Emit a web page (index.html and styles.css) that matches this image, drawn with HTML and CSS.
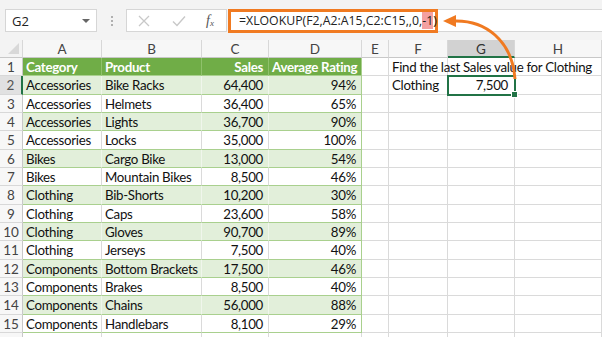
FILE: index.html
```html
<!DOCTYPE html>
<html>
<head>
<meta charset="utf-8">
<link rel="stylesheet" href="styles.css">
</head>
<body>
<div class="app">
  <div class="toolbar">
    <div class="namebox"><span>G2</span><span class="caret"></span></div>
    <div class="dots"><i></i><i></i><i></i></div>
    <div class="fxbox">
      <svg class="ic" width="12" height="12" viewBox="0 0 12 12"><path d="M1 1L11 11M11 1L1 11" stroke="#c8c8c8" stroke-width="1.3" fill="none"/></svg>
      <svg class="ic" width="14" height="12" viewBox="0 0 14 12"><path d="M1 6.5L5 10.5L13 1.5" stroke="#c8c8c8" stroke-width="1.4" fill="none"/></svg>
      <span class="fx">f<sub>x</sub></span>
    </div>
    <div class="field">
      <div class="formula">=XLOOKUP(F2,A2:A15,C2:C15,,0,<span class="hl">-1</span>)</div>
    </div>
  </div>
  <div class="sheet">
    <div class="ch corner"><span class="tri"></span></div>
    <div class="ch">A</div><div class="ch">B</div><div class="ch">C</div><div class="ch">D</div><div class="ch">E</div><div class="ch">F</div><div class="ch sel">G</div><div class="ch">H</div>

    <div class="rh">1</div>
    <div class="c th">Category</div><div class="c th">Product</div><div class="c th r">Sales</div><div class="c th r tl">Average Rating</div>
    <div class="c"></div><div class="c over">Find the last Sales value for Clothing</div><div class="c"></div><div class="c"></div>

    <div class="rh rsel">2</div>
    <div class="c b">Accessories</div><div class="c b">Bike Racks</div><div class="c b r">64,400</div><div class="c b r tl">94%</div>
    <div class="c"></div><div class="c">Clothing</div><div class="c r active">7,500<span class="handle"></span></div><div class="c"></div>

    <div class="rh">3</div>
    <div class="c w">Accessories</div><div class="c w">Helmets</div><div class="c w r">36,400</div><div class="c w r tl">65%</div>
    <div class="c"></div><div class="c"></div><div class="c"></div><div class="c"></div>

    <div class="rh">4</div>
    <div class="c b">Accessories</div><div class="c b">Lights</div><div class="c b r">36,700</div><div class="c b r tl">90%</div>
    <div class="c"></div><div class="c"></div><div class="c"></div><div class="c"></div>

    <div class="rh">5</div>
    <div class="c w">Accessories</div><div class="c w">Locks</div><div class="c w r">35,000</div><div class="c w r tl">100%</div>
    <div class="c"></div><div class="c"></div><div class="c"></div><div class="c"></div>

    <div class="rh">6</div>
    <div class="c b">Bikes</div><div class="c b">Cargo Bike</div><div class="c b r">13,000</div><div class="c b r tl">54%</div>
    <div class="c"></div><div class="c"></div><div class="c"></div><div class="c"></div>

    <div class="rh">7</div>
    <div class="c w">Bikes</div><div class="c w">Mountain Bikes</div><div class="c w r">8,500</div><div class="c w r tl">46%</div>
    <div class="c"></div><div class="c"></div><div class="c"></div><div class="c"></div>

    <div class="rh">8</div>
    <div class="c b">Clothing</div><div class="c b">Bib-Shorts</div><div class="c b r">10,200</div><div class="c b r tl">30%</div>
    <div class="c"></div><div class="c"></div><div class="c"></div><div class="c"></div>

    <div class="rh">9</div>
    <div class="c w">Clothing</div><div class="c w">Caps</div><div class="c w r">23,600</div><div class="c w r tl">58%</div>
    <div class="c"></div><div class="c"></div><div class="c"></div><div class="c"></div>

    <div class="rh">10</div>
    <div class="c b">Clothing</div><div class="c b">Gloves</div><div class="c b r">90,700</div><div class="c b r tl">89%</div>
    <div class="c"></div><div class="c"></div><div class="c"></div><div class="c"></div>

    <div class="rh">11</div>
    <div class="c w">Clothing</div><div class="c w">Jerseys</div><div class="c w r">7,500</div><div class="c w r tl">40%</div>
    <div class="c"></div><div class="c"></div><div class="c"></div><div class="c"></div>

    <div class="rh">12</div>
    <div class="c b">Components</div><div class="c b">Bottom Brackets</div><div class="c b r">17,500</div><div class="c b r tl">46%</div>
    <div class="c"></div><div class="c"></div><div class="c"></div><div class="c"></div>

    <div class="rh">13</div>
    <div class="c w">Components</div><div class="c w">Brakes</div><div class="c w r">8,500</div><div class="c w r tl">40%</div>
    <div class="c"></div><div class="c"></div><div class="c"></div><div class="c"></div>

    <div class="rh">14</div>
    <div class="c b">Components</div><div class="c b">Chains</div><div class="c b r">56,000</div><div class="c b r tl">88%</div>
    <div class="c"></div><div class="c"></div><div class="c"></div><div class="c"></div>

    <div class="rh">15</div>
    <div class="c w">Components</div><div class="c w">Handlebars</div><div class="c w r">8,100</div><div class="c w r tl">29%</div>
    <div class="c"></div><div class="c"></div><div class="c"></div><div class="c"></div>

    <div class="rh"></div>
    <div class="c"></div><div class="c"></div><div class="c"></div><div class="c"></div>
    <div class="c"></div><div class="c"></div><div class="c"></div><div class="c"></div>
  </div>
  <svg class="arrow" width="602" height="337" viewBox="0 0 602 337">
    <path d="M454 21 C485 20, 512 40, 515 79" stroke="#f07a21" stroke-width="3" fill="none"/>
    <polygon points="443,21 456,15 456,27" fill="#f07a21"/>
  </svg>
</div>
</body>
</html>
```

FILE: styles.css
```css
html, body {
  margin: 0;
  padding: 0;
}
body {
  width: 602px;
  height: 337px;
  overflow: hidden;
  background: #ffffff;
  font-family: Lato, "Liberation Sans", sans-serif;
}
.app {
  position: relative;
  width: 602px;
  height: 337px;
  overflow: hidden;
}
.toolbar {
  height: 40px;
  background: #f3f3f3;
  display: flex;
  align-items: flex-start;
  padding-top: 9px;
  box-sizing: border-box;
  padding-left: 5px;
}
.namebox {
  width: 92px;
  height: 23px;
  box-sizing: border-box;
  background: #fff;
  border: 1px solid #d6d6d6;
  display: flex;
  align-items: center;
  justify-content: space-between;
  padding: 0 6px 0 6px;
  font-family: "Open Sans", "Noto Sans", sans-serif;
  font-size: 13px;
  color: #222;
}
.caret {
  width: 0;
  height: 0;
  border-left: 4px solid transparent;
  border-right: 4px solid transparent;
  border-top: 4px solid #666;
}
.dots {
  width: 29px;
  height: 23px;
  display: flex;
  flex-direction: column;
  align-items: center;
  justify-content: center;
  gap: 2px;
}
.dots i {
  display: block;
  width: 2px;
  height: 2px;
  background: #b0b0b0;
}
.fxbox {
  width: 101px;
  height: 23px;
  box-sizing: border-box;
  background: #fff;
  border: 1px solid #d6d6d6;
  display: flex;
  align-items: center;
  padding-left: 11px;
  gap: 22px;
}
.fxbox .ic {
  display: block;
}
.fx {
  font-family: "Liberation Serif", serif;
  font-style: italic;
  font-size: 14px;
  color: #555;
  margin-left: -2px;
}
.fx sub {
  font-size: 9px;
  vertical-align: -1px;
}
.field {
  flex: 1;
  height: 23px;
  margin-left: 1px;
  background: #fff;
  border-top: 1px solid #d6d6d6;
  border-bottom: 1px solid #d6d6d6;
  box-sizing: border-box;
  position: relative;
}
.formula {
  position: absolute;
  left: 0;
  top: -1px;
  width: 210px;
  height: 24px;
  box-sizing: border-box;
  border: 3px solid #f07a21;
  padding-left: 8px;
  font-family: "Open Sans", "Noto Sans", sans-serif;
  font-size: 12.3px;
  line-height: 18px;
  color: #222;
  white-space: nowrap;
  background: #fff;
}
.hl {
  background: #f4a0a0;
}
.sheet {
  display: grid;
  grid-template-columns: 23px 79px 100px 67px 93px 27px 59px 67px 87px;
  grid-template-rows: 18px repeat(16, 18.33px);
}
.ch {
  background: #f7f7f7;
  border-right: 1px solid #d8d8d8;
  border-bottom: 1px solid #c8c8c8;
  box-sizing: border-box;
  font-size: 13.5px;
  color: #444;
  text-align: center;
  line-height: 18px;
}
.ch.corner {
  position: relative;
  background: #f3f3f3;
}
.tri {
  position: absolute;
  right: 3px;
  bottom: 3px;
  width: 0;
  height: 0;
  border-left: 11px solid transparent;
  border-bottom: 11px solid #d8d8d8;
}
.ch.sel {
  background: #d2d2d2;
  border-bottom: 2px solid #217346;
  color: #333;
}
.rh {
  background: #f7f7f7;
  border-right: 1px solid #c8c8c8;
  border-bottom: 1px solid #d8d8d8;
  box-sizing: border-box;
  font-size: 13.5px;
  color: #444;
  text-align: center;
  line-height: 18px;
}
.rh.rsel {
  background: #e1e1e1;
  border-right: 2px solid #217346;
  color: #555;
}
.c {
  border-right: 1px solid #dadada;
  border-bottom: 1px solid #dadada;
  box-sizing: border-box;
  font-size: 13.3px;
  letter-spacing: -0.3px;
  line-height: 18px;
  color: #111;
  padding: 0 3px 0 3px;
  white-space: nowrap;
  overflow: visible;
  position: relative;
}
.c.r {
  text-align: right;
  padding-right: 5px;
}
.c.th {
  background: #70ad47;
  color: #fff;
  font-weight: bold;
  border-right-color: #8fc16b;
  border-bottom-color: #a9d08e;
}
.c.b {
  background: #e2efda;
  border-right-color: #f0f6ec;
  border-bottom-color: #a9d08e;
}
.c.w {
  background: #fff;
  border-bottom-color: #a9d08e;
}
.c.tl {
  border-right-color: #a9d08e;
}
.c.over {
  z-index: 2;
  overflow: visible;
}
.c.active {
  outline: 2px solid #217346;
  outline-offset: -1px;
  z-index: 3;
  padding-right: 6px;
}
.handle {
  position: absolute;
  right: -4px;
  bottom: -4px;
  width: 5px;
  height: 5px;
  background: #217346;
  border: 1px solid #fff;
}
.arrow {
  position: absolute;
  left: 0;
  top: 0;
  pointer-events: none;
  z-index: 10;
}
```
